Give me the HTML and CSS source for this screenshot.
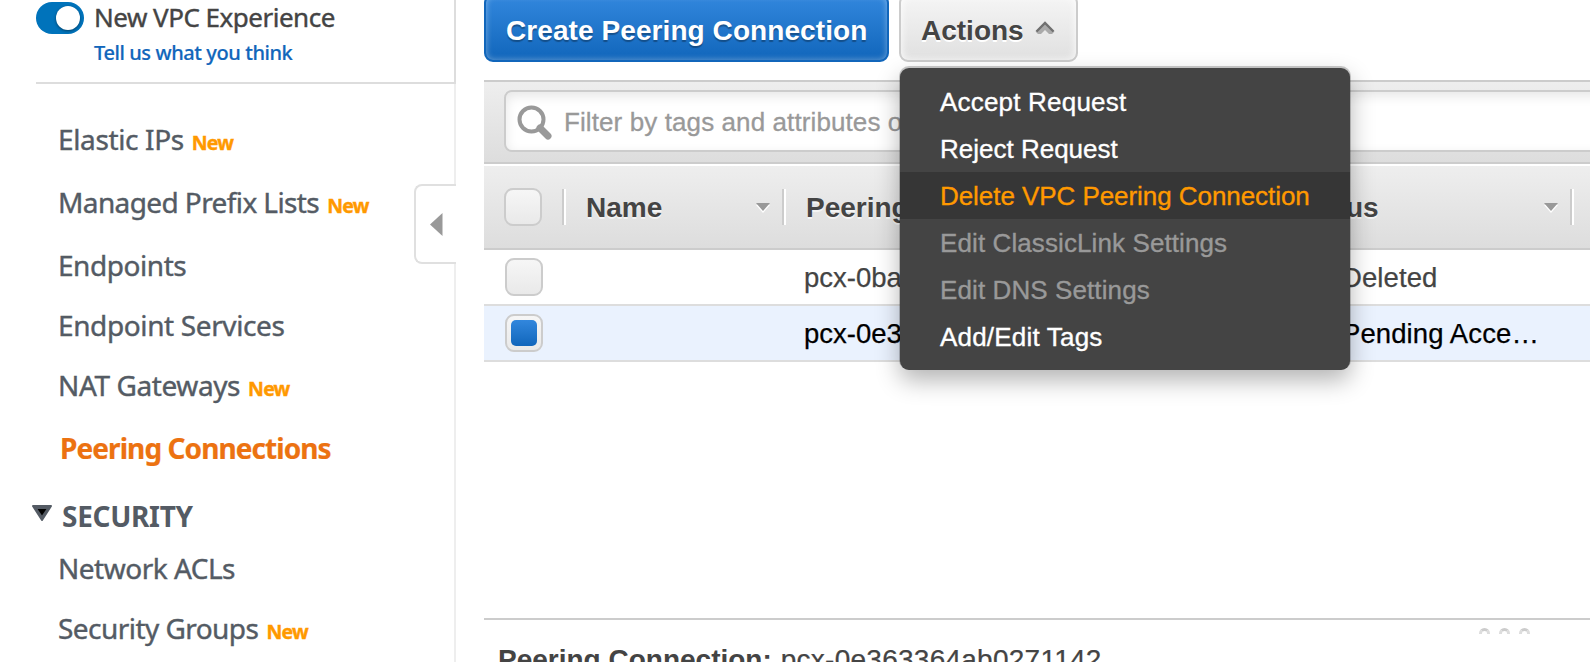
FILE: index.html
```html
<!DOCTYPE html>
<html lang="en">
<head>
<meta charset="utf-8">
<title>Peering Connections</title>
<link rel="stylesheet" href="styles.css">
</head>
<body>
<div class="app">
  <aside class="sidebar">
    <header class="experience">
      <span class="toggle"><span class="knob"></span></span>
      <div class="experience-text">
        <div class="experience-title">New VPC Experience</div>
        <a class="feedback">Tell us what you think</a>
      </div>
    </header>
    <nav class="nav">
      <a class="item tall"><span class="t-eip">Elastic IPs</span><b class="new">New</b></a>
      <a class="item tall"><span class="t-mpl">Managed Prefix Lists</span><b class="new">New</b></a>
      <a class="item"><span class="t-end">Endpoints</span></a>
      <a class="item"><span class="t-svc">Endpoint Services</span></a>
      <a class="item tall"><span class="t-nat">NAT Gateways</span><b class="new">New</b></a>
      <a class="item active"><span class="t-peer">Peering Connections</span></a>
      <div class="section">
        <svg class="caret" width="20" height="17" viewBox="0 0 20 17"><path d="M1 1h18l-9 14z" fill="#545b64" stroke="#545b64" stroke-width="2" stroke-linejoin="round"/><path d="M5.6 4h8.8L10 10.5z" fill="#000"/></svg>
        <span class="t-sec">SECURITY</span>
      </div>
      <a class="item"><span class="t-acl">Network ACLs</span></a>
      <a class="item"><span class="t-grp">Security Groups</span><b class="new">New</b></a>
    </nav>
    <div class="collapse"><svg width="13" height="24" viewBox="0 0 13 24"><path d="M12.5 0v23L0 11.5z" fill="#999"/></svg></div>
  </aside>
  <main class="main">
    <div class="toolbar">
      <button class="btn primary"><span>Create Peering Connection</span></button>
      <button class="btn secondary"><span>Actions</span><svg width="20" height="14" viewBox="0 0 20 14"><path d="M.5 10.500L10 1l9.500 9.500-2.500 2.500h-3L10 9l-4 4H3z" fill="#aaa"/><path d="M1.500 10.500L10 2l8.500 8.500" fill="none" stroke="#707070" stroke-width="2.400"/></svg></button>
    </div>
    <div class="filterbar">
      <div class="search">
        <svg width="36" height="36" viewBox="0 0 36 36"><circle cx="14.500" cy="14.500" r="12" fill="none" stroke="#999" stroke-width="4"/><path d="M23 23l8 8" stroke="#999" stroke-width="7" stroke-linecap="round"/></svg>
        <span>Filter by tags and attributes or search by keyword</span>
      </div>
    </div>
    <div class="row head">
      <div class="cell check"><span class="box"></span></div>
      <div class="cell name"><span>Name</span><i class="sort"></i></div>
      <div class="cell peering"><span>Peering</span></div>
      <div class="cell status"><span>Status</span><i class="sort"></i></div>
      <div class="cell rest"></div>
    </div>
    <div class="row data">
      <div class="cell check"><span class="box"></span></div>
      <div class="cell name"></div>
      <div class="cell peering"><span>pcx-0ba</span></div>
      <div class="cell status"><span>Deleted</span></div>
    </div>
    <div class="row data selected">
      <div class="cell check"><span class="box"><span class="fill"></span></span></div>
      <div class="cell name"></div>
      <div class="cell peering"><span>pcx-0e3</span></div>
      <div class="cell status"><span>Pending Acce…</span></div>
    </div>
    <div class="blank"></div>
    <section class="details">
      <div class="grip"><i></i><i></i><i></i></div>
      <div class="detail-title"><b>Peering Connection:</b><span>pcx-0e363364ab0271142</span></div>
    </section>
  </main>
  <div class="menu">
    <div class="menu-item loose"><span>Accept Request</span></div>
    <div class="menu-item"><span>Reject Request</span></div>
    <div class="menu-item hover"><span>Delete VPC Peering Connection</span></div>
    <div class="menu-item disabled"><span>Edit ClassicLink Settings</span></div>
    <div class="menu-item disabled"><span>Edit DNS Settings</span></div>
    <div class="menu-item loose"><span>Add/Edit Tags</span></div>
  </div>
</div>
</body>
</html>
```
FILE: styles.css
```css
* { box-sizing: border-box; }
body { margin: 0; background: #fff; overflow: hidden; }
.app { position: relative; display: flex; width: 1590px; height: 662px; overflow: hidden; font-family: "Liberation Sans", Arial, sans-serif; color: #444; }

/* sidebar */
.sidebar { position: relative; width: 456px; height: 662px; flex: none; font-family: "Noto Sans", sans-serif; font-stretch: 87.5%; white-space: nowrap; }
.sidebar::after { content: ""; position: absolute; right: 0; top: 84px; bottom: 0; width: 2px; background: #eee; }
.experience { display: flex; margin-left: 36px; height: 84px; border-right: 2px solid #ddd; border-bottom: 2px solid #ddd; }
.toggle { width: 48px; height: 32px; margin-top: 2px; border-radius: 16px; background: #0073bb; padding: 4px 4px 4px 20px; }
.knob { display: block; width: 24px; height: 24px; border-radius: 50%; background: #fff; box-shadow: 0 1px 3px rgba(0,0,0,.45); }
.experience-text { padding-left: 10px; }
.experience-title { font-size: 26px; line-height: 35px; letter-spacing: -.5px; -webkit-text-stroke: .4px; }
.feedback { display: block; font-size: 20px; line-height: 36px; letter-spacing: -.42px; color: #1166bb; font-weight: 500; -webkit-text-stroke: .2px; }
.nav { padding: 25px 0 0 58px; color: #545b64; -webkit-text-stroke: .4px; }
.item { display: flex; align-items: baseline; height: 60px; line-height: 60px; font-size: 28px; }
.item.tall { height: 63px; }
.new { margin-left: 8px; font-size: 19.500px; letter-spacing: -.8px; color: #f90; }
.item.active { height: 68px; padding-left: 2px; color: #ec7211; font-weight: 700; -webkit-text-stroke: .2px; }
.section { display: flex; height: 52px; line-height: 60px; margin-left: -26px; font-size: 28px; font-weight: 700; -webkit-text-stroke: 0; }
.caret { margin: 19px 10px 0 0; }
.t-eip { letter-spacing: -.37px; }
.t-mpl { letter-spacing: -.6px; }
.t-end { letter-spacing: -.45px; }
.t-svc { letter-spacing: -.38px; }
.t-nat { letter-spacing: -.4px; }
.t-peer { letter-spacing: -.92px; }
.t-sec { letter-spacing: -.3px; }
.t-acl { letter-spacing: -.5px; }
.t-grp { letter-spacing: -.55px; }
.collapse { position: absolute; z-index: 1; right: 0; top: 184px; width: 42px; height: 80px; border: 2px solid #e0e0e0; border-right: 0; border-radius: 8px 0 0 8px; background: #fff; padding: 27px 0 0 14px; }
.collapse svg { display: block; }

/* main */
.main { flex: none; margin-left: 28px; width: 1106px; height: 662px; display: flex; flex-direction: column; white-space: nowrap; }
.toolbar { display: flex; gap: 10px; height: 80px; flex: none; }
.btn { display: flex; align-items: center; height: 68px; margin-top: -6px; padding: 5px 20px 0; border-radius: 9px; font: 700 28px/40px "Liberation Sans", Arial, sans-serif; }
.primary { width: 405px; color: #fff; letter-spacing: .08px; border: 2px solid #1166bb; background: linear-gradient(#3287dd, #1166bb); box-shadow: inset 0 0 6px rgba(255,255,255,.4); text-shadow: 0 2px 1px rgba(0,0,0,.3); }
.secondary { width: 179px; gap: 11px; color: #444; border: 2px solid #ccc; background: linear-gradient(#f5f5f5, #e0e0e0); box-shadow: inset 0 0 8px #fff; text-shadow: 0 2px 0 #fff; }
.secondary svg { margin-top: -5px; }
.filterbar { height: 84px; flex: none; padding: 8px 0 0 20px; border: solid #ccc; border-width: 2px 0; background: linear-gradient(#eee, #ddd); }
.search { display: flex; width: 1200px; height: 62px; padding: 11px; border: 2px solid #ccc; border-radius: 8px; background: #fff; box-shadow: inset 0 4px 12px rgba(0,0,0,.1); font-size: 26px; line-height: 38px; letter-spacing: .1px; color: #999; -webkit-text-stroke: .3px; }
.search svg { margin: 2px 11px 0 0; flex: none; }
.row { display: grid; grid-template-columns: 78px 220px 542px 246px 1fr; flex: none; align-items: center; }
.cell { display: flex; align-items: center; }
.head { height: 84px; margin-top: 2px; padding-bottom: 1px; border-bottom: 2px solid #ccc; background: linear-gradient(#eee, #ddd); font-size: 28px; font-weight: 700; text-shadow: 0 2px 0 rgba(255,255,255,.6); }
.head .cell { height: 36px; }
.head .cell > span:not(.box) { padding-top: 2px; }
.head .name, .head .peering, .head .rest { border-left: 2px solid #ccc; box-shadow: inset 2px 0 #fff; }
.head .name, .head .peering { padding-left: 22px; }
.head .sort { margin: 1px 12px 0 auto; border: solid transparent; border-width: 8px 7.500px 0; border-top-color: #999; filter: drop-shadow(0 2px 0 #fff); }
.head .status { padding-left: 19px; margin-left: -50px; }
.check { padding-left: 20px; }
.data .check { padding-left: 21px; }
.box { display: grid; place-items: center; width: 38px; height: 38px; border: 2px solid #ccc; border-radius: 9px; background: linear-gradient(#f6f6f6, #e9e9e9); }
.fill { width: 26px; height: 26px; border-radius: 5px; background: linear-gradient(#3287dd, #1166bb); }
.data { height: 56px; border-bottom: 2px solid #ddd; font-size: 27.500px; -webkit-text-stroke: .25px; }
.data .cell > span:not(.box) { padding-top: 2px; }
.data .peering { padding-left: 22px; }
.data .status { padding-left: 18px; letter-spacing: .1px; }
.selected { background: #eaf2fe; color: #000; }
.blank { height: 256px; flex: none; }
.details { flex: none; height: 80px; border-top: 2px solid #ccc; }
.grip { display: flex; gap: 9px; height: 14px; padding: 8px 0 0 995px; overflow: hidden; }
.grip i { flex: none; width: 11px; height: 11px; border: 3px solid #ddd; border-top-color: #ccc; border-radius: 50%; }
.detail-title { display: flex; gap: 9px; padding: 10px 0 0 14px; font-size: 28px; line-height: 32px; }
.detail-title span { letter-spacing: .25px; -webkit-text-stroke: .25px; }

/* action menu */
.menu { position: absolute; left: 900px; top: 68px; width: 450px; height: 302px; padding: 10px 0; border-radius: 9px; background: #444; box-shadow: 0 -1px 0 1px rgba(0,0,0,.2), 0 10px 24px rgba(0,0,0,.3); color: #fff; font-size: 26px; white-space: nowrap; -webkit-text-stroke: .35px; }
.menu-item { height: 47px; line-height: 48px; padding-left: 40px; }
.menu-item.loose { letter-spacing: .2px; }
.menu-item.hover { background: #363636; color: #f90; letter-spacing: -.06px; }
.menu-item.disabled { color: #999; letter-spacing: .1px; }
```
